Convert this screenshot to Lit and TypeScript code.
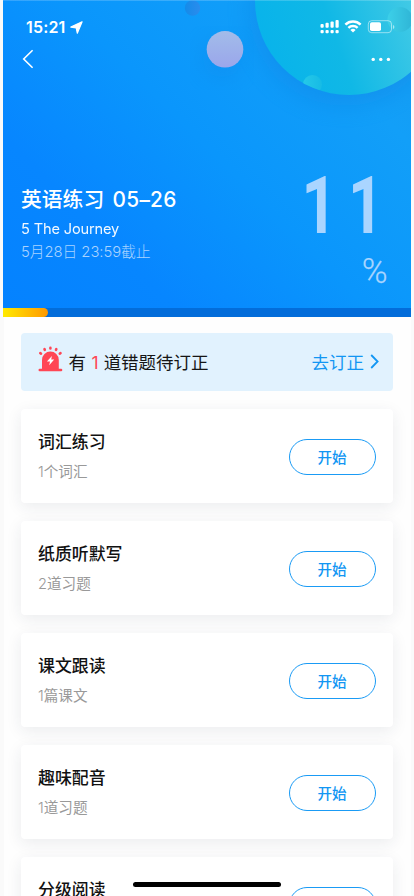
import { LitElement, html, css, svg } from "lit";
import { customElement, property } from "lit/decorators.js";

@customElement("status-bar")
class StatusBar extends LitElement {
  static styles = css`
    :host { display: block; height: 45px; color: #fff; }
    .bar { display: flex; justify-content: space-between; padding: 19px 13.5px 0 23px; }
    .time { display: flex; align-items: center; height: 16px; font: 600 16px/16px Inter, sans-serif; letter-spacing: .15px; }
    .time svg { margin-left: 5px; }
    svg { display: block; }
  `;
  render() {
    const xs = [0, 5, 10, 15];
    return html`<div class="bar">
      <div class="time"><span>15:21</span>
        <svg width="13" height="13" viewBox="0 0 13 13"><path d="M12.1 .8 7.3 12.2 6.2 6.9.8 6.1Z" fill="#fff" stroke="#fff" stroke-width="1.2" stroke-linejoin="round"/></svg>
      </div>
      <svg width="78" height="16" viewBox="0 0 78 16" fill="#fff">
        <g transform="translate(1.5 0)">
          ${xs.map((x, i) => svg`<rect x=${x} y=${5 - i * 1.3} width="3.2" height=${3.8 + i * 1.3} rx="1"/><rect x=${x} y="11" width="3.2" height="3.2" rx="1"/>`)}
        </g>
        <g transform="translate(25.5 0)" fill="none" stroke="#fff" stroke-width="2.5">
          <path d="M.9 5.6a11 11 0 0 1 15.2 0M3.9 8.8a6.7 6.7 0 0 1 9.2 0"/>
          <path d="M8.5 13.5 5.9 10.9a3.8 3.8 0 0 1 5.2 0Z" fill="#fff" stroke="none"/>
        </g>
        <rect x="49.3" y="1.7" width="23.2" height="12" rx="3.4" fill="none" stroke="#fff" stroke-opacity=".5"/>
        <rect x="51" y="3.3" width="11" height="8.8" rx="1.8"/>
        <path d="M74 6v4q1.4-.6 1.4-2T74 6Z" opacity=".55"/>
      </svg>
    </div>`;
  }
}

@customElement("task-card")
class TaskCard extends LitElement {
  @property() name = "";
  @property() detail = "";
  static styles = css`
    :host { display: block; }
    .card { box-sizing: border-box; height: 94.5px; border-radius: 4px; background: #fff; padding: 0 17px;
      display: flex; align-items: center; justify-content: space-between; box-shadow: 0 4px 16px rgba(40,50,70,.085); }
    .name { font-weight: 500; font-size: 16.9px; line-height: 26px; color: #111; }
    .detail { font-size: 14.6px; line-height: 22px; margin-top: 6px; color: #999; }
    .detail::first-letter { font-weight: 300; }
    .start { box-sizing: border-box; width: 87px; height: 36px; border: 1.2px solid #1a9bf5; border-radius: 18px; background: #fff;
      color: #1296f3; font: 500 14.6px/32px Inter, "Noto Sans CJK SC", sans-serif; padding: 2px 1px 0 0; margin-top: 2px; }
  `;
  render() {
    return html`<div class="card"><div class="text"><div class="name">${this.name}</div><div class="detail">${this.detail}</div></div>
      <button class="start">开始</button></div>`;
  }
}

@customElement("app-root")
class AppRoot extends LitElement {
  static styles = css`
    :host { display: block; position: relative; width: 414px; height: 896px; overflow: hidden; background: #fafafa;
      font-family: Inter, "Noto Sans CJK SC", sans-serif; }
    .page { margin: 0 3.5px; height: 896px; background: #fefefe; }
    .hero { position: relative; height: 316.5px; overflow: hidden; color: #fff; margin: 0 0 0 -.5px;
      background: linear-gradient(45deg, #0482ff 0%, #0786ff 25%, #0a96fc 52%, #129ff8 80%, #189cf0 100%); }
    .art { position: absolute; left: 0; top: 0; display: block; }
    .content { position: relative; height: 308px; display: flex; flex-direction: column; }
    .nav { display: flex; justify-content: space-between; align-items: center; height: 28px; padding: 0 19.5px 0 18.5px; }
    .nav svg { display: block; }
    .info { display: flex; justify-content: space-between; margin: 98px 23px 0 18px; }
    .lines { padding-top: 12px; white-space: nowrap; }
    .title { font-size: 20.8px; font-weight: 500; line-height: 34px; }
    .title span { margin-left: 2.5px; letter-spacing: .3px; }
    .book { font-size: 14.6px; line-height: 24px; letter-spacing: -.15px; opacity: .95; }
    .due { font-size: 14.8px; line-height: 22px; letter-spacing: -.05px; font-weight: 300; color: #a9d3ff; }
    .score { width: 84px; color: #aad5ff; font-family: Roboto, sans-serif; }
    .number { font-size: 79px; font-weight: 700; line-height: 70px; letter-spacing: 14.2px; white-space: nowrap; transform: translateX(-2.5px) scaleX(.78); transform-origin: left; }
    .percent { font-size: 35px; font-weight: 300; line-height: 40px; margin-top: 11px; text-align: right; -webkit-text-stroke: .25px #aad5ff; }
    .track { position: relative; height: 8.5px; background: #036dda; }
    .fill { height: 8.5px; border-radius: 0 4.5px 4.5px 0; background: linear-gradient(90deg, #ffea00, #ff9800); }
    .list { padding: 16.5px 17.5px 0; display: flex; flex-direction: column; gap: 17.5px; }
    .notice { display: flex; align-items: center; height: 58px; padding: 0 14px 0 17px; border-radius: 4px; background: #e1f2fe;
      font-size: 17.5px; color: #151515; white-space: nowrap; }
    .notice svg { display: block; flex: none; }
    .siren { margin-bottom: 6px; }
    .message { margin: 0 0 1px 5.5px; flex: 1; }
    .count { color: #ff4655; margin: 0 5px 0 5.5px; }
    .go { display: flex; align-items: center; color: #1296f3; gap: 6px; margin-bottom: 1px; }
    .home { position: absolute; left: 133.3px; top: 881.8px; width: 147.5px; height: 5.5px; border-radius: 3px; background: #000; }
  `;
  private tasks = [
    ["词汇练习", "1个词汇"], ["纸质听默写", "2道习题"], ["课文跟读", "1篇课文"], ["趣味配音", "1道习题"], ["分级阅读", ""],
  ];
  render() {
    return html`<div class="page">
      <section class="hero">
        <svg class="art" width="407.5" height="308" viewBox="3 0 407.5 308">
          <defs>
            <linearGradient id="teal" x1="0" y1=".7" x2="1" y2=".35"><stop offset="0" stop-color="#08b3eb"/><stop offset=".38" stop-color="#10b8e6"/><stop offset="1" stop-color="#58d2e5"/></linearGradient>
            <linearGradient id="lilac" x1="0" y1="0" x2="0" y2="1"><stop offset="0" stop-color="#a2bce9"/><stop offset="1" stop-color="#9aa6eb"/></linearGradient>
            <linearGradient id="small" x1="0" y1="0" x2="1" y2="0"><stop offset="0" stop-color="#25c8e8"/><stop offset="1" stop-color="#17bbe5"/></linearGradient>
            <linearGradient id="corner" x1="0" y1="0" x2="1" y2="0"><stop offset="0" stop-color="#3cd0e9"/><stop offset="1" stop-color="#2fb5d6"/></linearGradient>
            <linearGradient id="blue" x1="0" y1="0" x2="1" y2="0"><stop offset="0" stop-color="#148be9"/><stop offset="1" stop-color="#2b8ced"/></linearGradient>
            <filter id="soft" x="-30%" y="-30%" width="160%" height="160%"><feGaussianBlur stdDeviation="11"/></filter>
            <clipPath id="disc"><circle cx="349" cy="1" r="94"/></clipPath>
          </defs>
          <circle cx="345" cy="10" r="96" fill="#0874d8" opacity=".27" filter="url(#soft)"/>
          <circle cx="222" cy="58" r="20" fill="#0874d8" opacity=".2" filter="url(#soft)"/>
          <circle cx="349" cy="1" r="94" fill="url(#teal)"/>
          <g clip-path="url(#disc)"><circle cx="312.5" cy="84.5" r="9.5" fill="url(#small)"/><circle cx="400" cy="19.5" r="12.5" fill="url(#corner)"/></g>
          <circle cx="192.5" cy="8" r="7.7" fill="url(#blue)"/>
          <circle cx="225" cy="49.3" r="18.3" fill="url(#lilac)"/>
          <path d="M3 .5h408" stroke="#fff" stroke-opacity=".18"/>
        </svg>
        <div class="content">
          <status-bar></status-bar>
          <div class="nav">
            <svg width="12" height="20" viewBox="0 0 12 20"><path d="M10.6 1.2 1.7 10l8.9 8.8" fill="none" stroke="#fff" stroke-width="1.6"/></svg>
            <svg width="20" height="6" viewBox="0 0 20 6" fill="#fff"><circle cx="2.2" cy="3.4" r="1.7"/><circle cx="9.8" cy="3.4" r="1.7"/><circle cx="17.4" cy="3.4" r="1.7"/></svg>
          </div>
          <div class="info">
            <div class="lines"><div class="title">英语练习<span> 05–26</span></div><div class="book">5 The Journey</div><div class="due">5月28日 23:59截止</div></div>
            <div class="score"><div class="number">11</div><div class="percent">%</div></div>
          </div>
        </div>
        <div class="track"><div class="fill" style="width:11%"></div></div>
      </section>
      <main class="list">
        <div class="notice">
          <svg class="siren" width="25" height="26" viewBox="0 0 25 26">
            <g fill="none" stroke="#ff4655" stroke-width="2.6" stroke-linecap="round"><path d="M12.4 1.9v.5M6.5 3.2l.3.6M18.3 3.2l-.3.6M2.3 7.2l.7.4M22.5 7.2l-.7.4"/></g>
            <path d="M4 23.5V13.9a8.4 8.4 0 0 1 16.8 0v9.6Z" fill="#ff4655"/><path d="M1.7 24h21.4" stroke="#ff4655" stroke-width="2.4" stroke-linecap="round"/>
            <path d="M13.9 10 8.9 15.5H12l-.8 3.8 5-5.7h-3Z" fill="#fff"/>
          </svg>
          <div class="message">有<span class="count">1</span>道错题待订正</div>
          <div class="go">去订正<svg width="9" height="15" viewBox="0 0 9 15"><path d="M1.2 1 7.6 7.5 1.2 14" fill="none" stroke="#1296f3" stroke-width="1.8"/></svg></div>
        </div>
        ${this.tasks.map(([name, detail]) => html`<task-card .name=${name} .detail=${detail || "\u00a0"}></task-card>`)}
      </main>
    </div>
    <div class="home"></div>`;
  }
}
